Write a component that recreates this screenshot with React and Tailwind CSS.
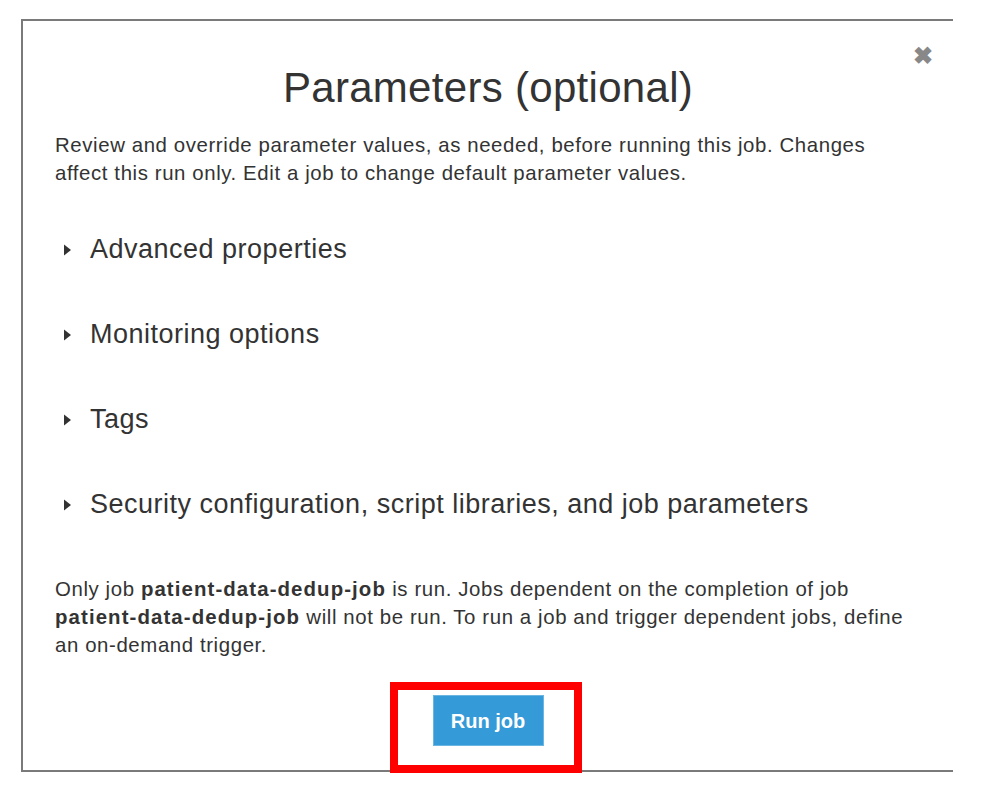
import React from "react";

const font = { fontFamily: '"Liberation Sans", Arial, Helvetica, sans-serif' };

function Item({ label }) {
  return (
    <div className="flex items-center h-[85px]">
      <svg width="10" height="14" viewBox="0 0 10 14" className="ml-[8px] mr-[17px]">
        <path d="M1 1.5 L8 7 L1 12.5 Z" fill="#333" />
      </svg>
      <span className="text-[27px] tracking-[0.5px] text-[#333] leading-none">{label}</span>
    </div>
  );
}

export default function App() {
  return (
    <div className="w-[1006px] h-[796px] bg-white relative overflow-hidden" style={font}>
      <div className="absolute left-[21px] top-[19px] w-[932px] h-[753px] border-l-2 border-t-2 border-b-2 border-[#7a7a7a] bg-white">
        <div className="relative flex flex-col h-full pl-[32px] pr-[20px]">
          <div className="absolute right-[20px] top-[23px] text-[#888] text-[24px] font-bold leading-none">✖</div>
          <h1 className="text-center text-[42px] tracking-[0.3px] text-[#333] leading-none mt-[46px] ml-[-32px] mr-[-20px]">
            Parameters (optional)
          </h1>
          <p className="text-[20.4px] tracking-[0.6px] leading-[28px] text-[#333] mt-[22px] whitespace-nowrap">
            Review and override parameter values, as needed, before running this job. Changes
            <br />
            affect this run only. Edit a job to change default parameter values.
          </p>
          <div className="mt-[20px]">
            <Item label="Advanced properties" />
            <Item label="Monitoring options" />
            <Item label="Tags" />
            <Item label="Security configuration, script libraries, and job parameters" />
          </div>
          <p className="text-[20.4px] tracking-[0.6px] leading-[28px] text-[#333] mt-[28px] whitespace-nowrap">
            Only job <b className="tracking-[1.1px]">patient-data-dedup-job</b> is run. Jobs dependent on the completion of job
            <br />
            <b className="tracking-[1.1px]">patient-data-dedup-job</b> will not be run. To run a job and trigger dependent jobs, define
            <br />
            an on-demand trigger.
          </p>
          <div className="flex justify-center mt-[36px] ml-[-32px] mr-[-20px]">
            <button className="w-[111px] h-[51px] bg-[#359ad8] text-white text-[20px] font-bold border border-[#6bb5e3]">
              Run job
            </button>
          </div>
        </div>
      </div>
      <div className="absolute left-[390px] top-[682px] w-[192px] h-[91px] border-[8px] border-[#ff0000]" />
    </div>
  );
}
